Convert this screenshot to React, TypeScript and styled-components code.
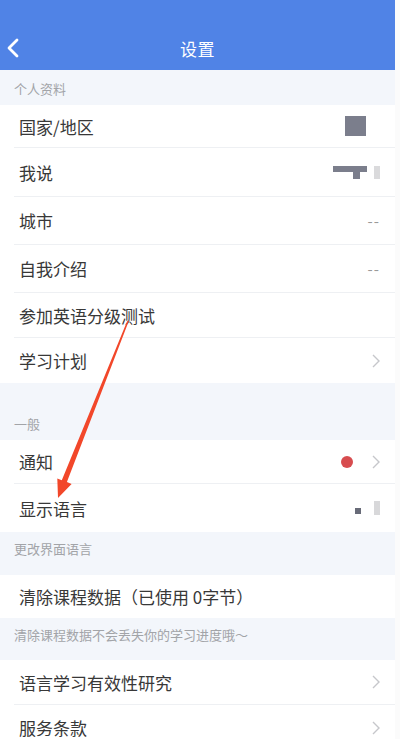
import type { FC, ReactNode } from 'react';
import styled, { createGlobalStyle } from 'styled-components';

const GlobalStyle = createGlobalStyle`
    html, body {
        margin: 0;
        padding: 0;
        background: #fbfbfb;
    }
    body {
        font-family: "Noto Sans CJK SC", "Noto Sans", sans-serif;
    }
`;

const Screen = styled.div`
    position: relative;
    width: 395px;
    height: 739px;
    overflow: hidden;
    background: #f3f6fb;
`;

const Header = styled.header`
    height: 70px;
    padding-top: 26px;
    box-sizing: border-box;
    background: #5083e6;
`;

const NavBar = styled.div`
    position: relative;
    height: 44px;
    display: flex;
    align-items: center;
    justify-content: center;
`;

const BackButton = styled.button`
    position: absolute;
    left: 6px;
    top: 12px;
    width: 18px;
    height: 20px;
    padding: 0;
    border: 0;
    background: none;
    display: flex;
`;

const Title = styled.h1`
    margin: 0;
    font-size: 17px;
    font-weight: 400;
    color: #fff;
    letter-spacing: 0.5px;
`;

const Caption = styled.div<{ $h: number; $top?: boolean }>`
    height: ${(p) => p.$h}px;
    box-sizing: border-box;
    padding: 0 14px;
    display: flex;
    align-items: ${(p) => (p.$top ? 'flex-start' : 'flex-end')};
    padding-top: ${(p) => (p.$top ? 7 : 0)}px;
    padding-bottom: ${(p) => (p.$top ? 0 : 7)}px;
    font-size: 13px;
    color: #a2a4a8;
`;

const Group = styled.div`
    background: #fff;
    padding-left: 14px;
`;

const Row = styled.div<{ $h: number; $line?: boolean }>`
    height: ${(p) => p.$h}px;
    box-sizing: border-box;
    padding: 0 15px 0 5px;
    display: flex;
    align-items: center;
    border-bottom: ${(p) => (p.$line ? '1px solid #eef0f3' : 'none')};
`;

const Label = styled.span`
    flex: 1;
    font-size: 17px;
    color: #383838;
`;

const Value = styled.span`
    display: flex;
    align-items: center;
    gap: 7px;
    font-size: 15px;
    color: #9a9a9a;
    letter-spacing: 1px;
`;

const Block = styled.span<{ $w: number; $h: number; $c: string }>`
    display: block;
    width: ${(p) => p.$w}px;
    height: ${(p) => p.$h}px;
    background: ${(p) => p.$c};
`;

const Dot = styled.span`
    width: 12px;
    height: 12px;
    border-radius: 50%;
    background: #d74c4f;
    margin-right: 12px;
`;

const Overlay = styled.svg`
    position: absolute;
    left: 0;
    top: 0;
    pointer-events: none;
`;

const Chevron: FC = () => (
    <svg width="8" height="14" viewBox="0 0 8 14">
        <path d="M1 1l6 6-6 6" fill="none" stroke="#c6c7cb" strokeWidth="1.4" />
    </svg>
);

const Item: FC<{ label: string; h: number; line?: boolean; children?: ReactNode }> = ({
    label,
    h,
    line,
    children,
}) => (
    <Row $h={h} $line={line}>
        <Label>{label}</Label>
        {children && <Value>{children}</Value>}
    </Row>
);

export default function App() {
    return (
        <Screen>
            <GlobalStyle />
            <Header>
                <NavBar>
                    <BackButton aria-label="back">
                        <svg width="14" height="20" viewBox="0 0 14 20">
                            <path
                                d="M11 2L3 10l8 8"
                                fill="none"
                                stroke="#fff"
                                strokeWidth="2.8"
                                strokeLinecap="round"
                                strokeLinejoin="round"
                            />
                        </svg>
                    </BackButton>
                    <Title>设置</Title>
                </NavBar>
            </Header>

            <Caption $h={35}>个人资料</Caption>
            <Group>
                <Item label="国家/地区" h={43} line>
                    <Block $w={21} $h={20} $c="#7b7e8c" style={{ marginRight: 14 }} />
                </Item>
                <Item label="我说" h={49} line>
                    <span style={{ display: 'flex', alignItems: 'flex-start' }}>
                        <Block $w={20} $h={6} $c="#7b7e8c" />
                        <Block $w={7} $h={13} $c="#7b7e8c" />
                        <Block $w={7} $h={6} $c="#7b7e8c" />
                    </span>
                    <Block $w={6} $h={13} $c="#dadadc" />
                </Item>
                <Item label="城市" h={48} line>
                    --
                </Item>
                <Item label="自我介绍" h={48} line>
                    --
                </Item>
                <Item label="参加英语分级测试" h={45} line />
                <Item label="学习计划" h={45}>
                    <Chevron />
                </Item>
            </Group>

            <Caption $h={57}>一般</Caption>
            <Group>
                <Item label="通知" h={44} line>
                    <Dot />
                    <Chevron />
                </Item>
                <Item label="显示语言" h={48}>
                    <Block $w={6} $h={6} $c="#686b78" style={{ marginTop: 6, marginRight: 6 }} />
                    <Block $w={6} $h={14} $c="#d8d8da" />
                </Item>
            </Group>
            <Caption $h={43} $top>
                更改界面语言
            </Caption>
            <Group>
                <Item label="清除课程数据（已使用 0字节）" h={43} />
            </Group>
            <Caption $h={42} $top>
                清除课程数据不会丢失你的学习进度哦～
            </Caption>
            <Group>
                <Item label="语言学习有效性研究" h={45} line>
                    <Chevron />
                </Item>
                <Item label="服务条款" h={45}>
                    <Chevron />
                </Item>
            </Group>

            <Overlay width="395" height="739" viewBox="0 0 395 739">
                <polygon
                    points="128.9,320.8 127.1,321.2 61.8,480.3 57.3,478.5 58,498 71.6,484.1 66.9,482.1"
                    fill="#f2472a"
                />
            </Overlay>
        </Screen>
    );
}
